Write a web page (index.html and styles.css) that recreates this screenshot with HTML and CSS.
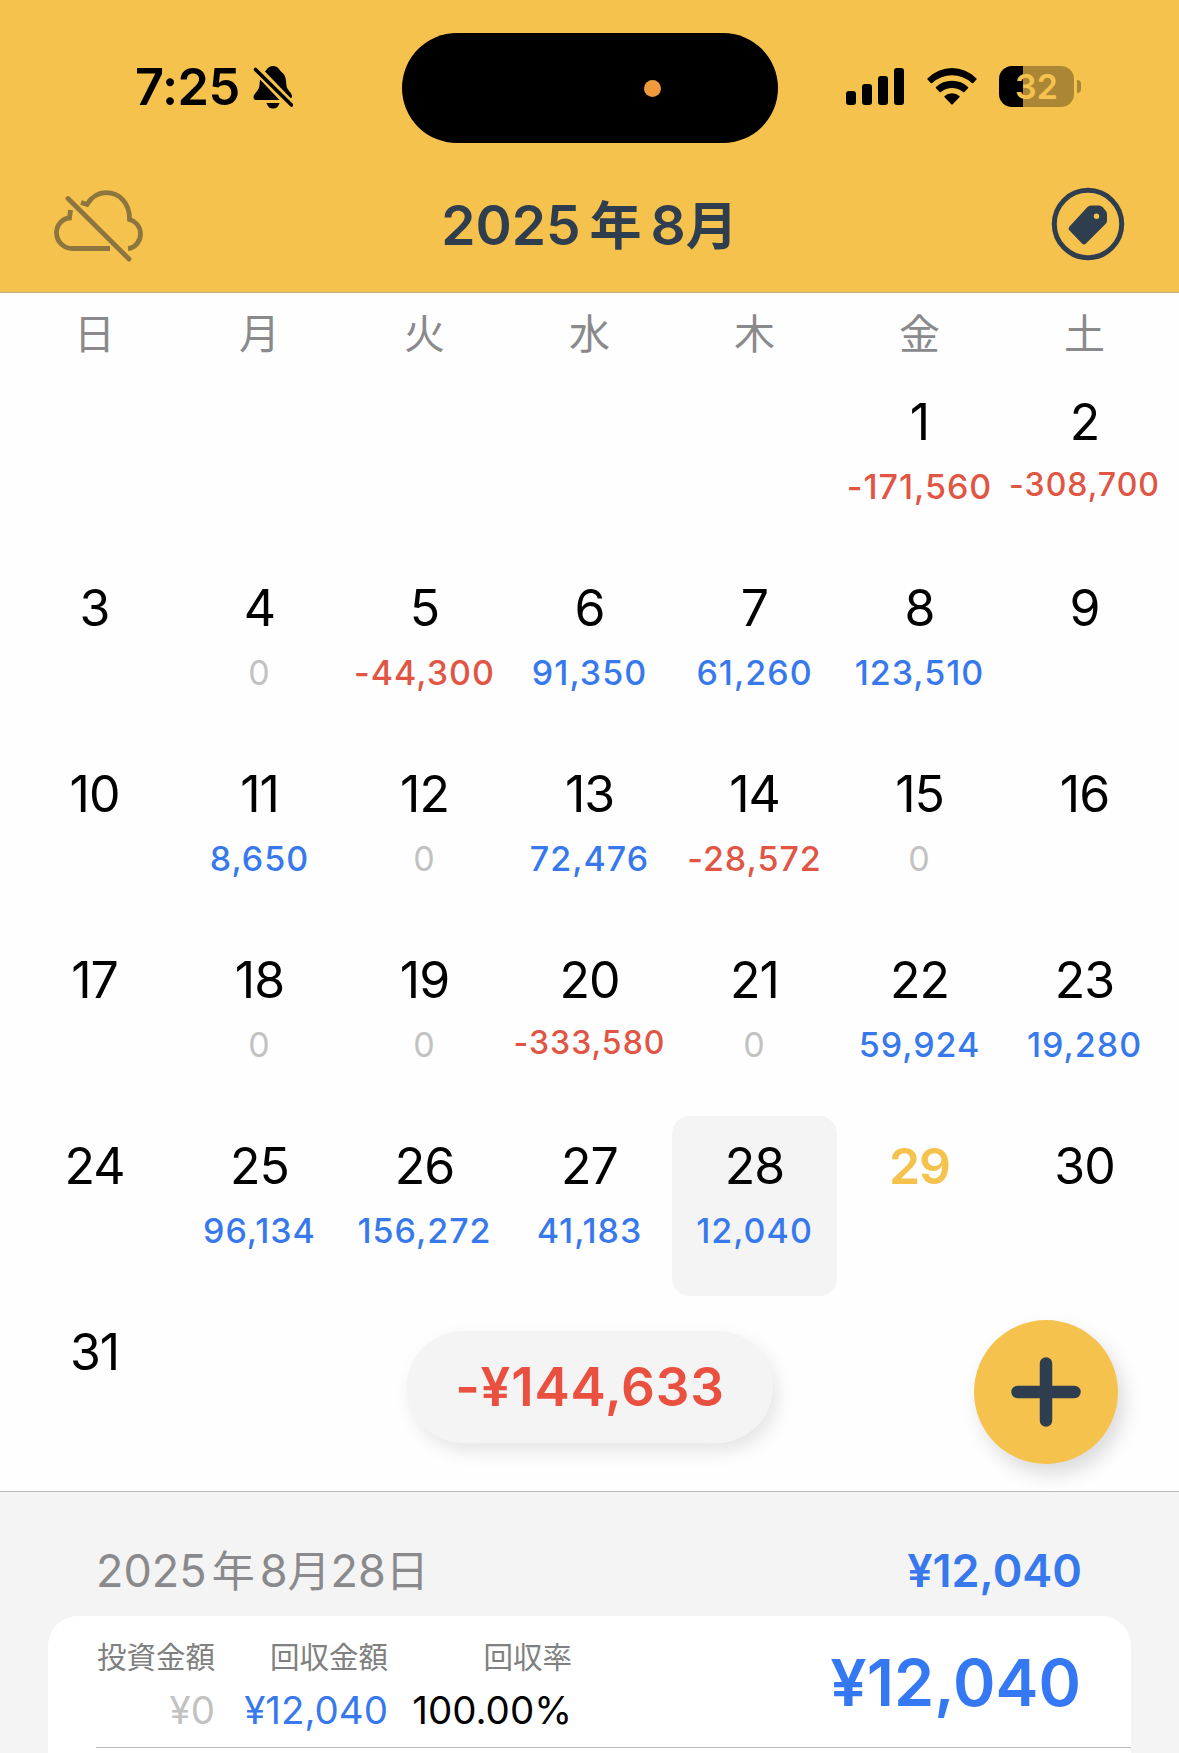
FILE: index.html
```html
<!DOCTYPE html>
<html lang="ja">
<head>
    <meta charset="UTF-8">
    <meta name="viewport" content="width=device-width, initial-scale=1.0">
    <title>2025年8月</title>
    <link rel="stylesheet" href="styles.css">
</head>
<body>

    <header class="header">
        <!-- ステータスバー -->
        <div class="status-bar">
            <div class="status-left">
                <span class="time">7:25</span>
                <svg class="bell" width="40" height="44" viewBox="0 0 40 44">
                    <path d="M12 6.500C14 5 14.500 1.200 20 1C25.500 1.200 26.500 5.500 28.500 7C33.500 10.500 33 17 33.500 21C34 25 39 27.500 39 31.500Q39 33 37.500 33Z"/>
                    <path d="M7 14.500L26.500 35H3Q.5 35 .5 32C.5 28.500 6 26.500 6.500 20Z"/>
                    <path d="M13.500 38H26.500Q25 43.500 20 43.500T13.500 38Z"/>
                    <path d="M2.500 4.500L38.500 40" fill="none" stroke="#f5c24d" stroke-width="7"/>
                    <path d="M2.500 4.500L38.500 40" fill="none" stroke="#000" stroke-width="3.600" stroke-linecap="round"/>
                </svg>
            </div>
            <div class="island"><span class="mic-dot"></span></div>
            <div class="status-right">
                <svg class="signal" width="58" height="37" viewBox="0 0 58 37">
                    <rect x="0" y="23" width="10" height="14" rx="3"/>
                    <rect x="16" y="16" width="10" height="21" rx="3"/>
                    <rect x="32" y="8" width="10" height="29" rx="3"/>
                    <rect x="48" y="0" width="10" height="37" rx="3"/>
                </svg>
                <svg class="wifi" width="50" height="37" viewBox="0 0 50 37">
                    <path d="M.5 10.500Q11 0 25 0T49.500 10.500Q50 11 49.500 11.600L46.200 15Q45.500 15.600 44.800 15Q36 7.300 25 7.300T5.200 15Q4.500 15.600 3.800 15L.5 11.600Q0 11 .5 10.500Z"/>
                    <path d="M9 19Q15.500 12.700 25 12.700T41 19Q41.600 19.600 41 20.200L37.400 24Q36.800 24.600 36.100 24Q31 20 25 20T13.900 24Q13.200 24.600 12.600 24L9 20.200Q8.400 19.600 9 19Z"/>
                    <path d="M17.600 28Q20.500 25.200 25 25.200T32.400 28Q33 28.600 32.400 29.200L25.700 36.300Q25 37 24.300 36.300L17.600 29.200Q17 28.600 17.600 28Z"/>
                </svg>
                <div class="battery">
                    <span class="battery-body">32</span>
                    <span class="battery-tip"></span>
                </div>
            </div>
        </div>

        <!-- ナビゲーション -->
        <div class="nav">
            <svg class="cloud-off" width="90" height="72" viewBox="0 0 90 72">
                <path d="M27 12.500L33 14.500C38 6.500 44 2.700 52 2.700C65.500 2.700 75.500 13 75.500 28.500V29.500C82 31.500 86.500 37 86.500 44C86.500 51.500 81 58 74 58.500" />
                <path d="M16.500 20L15.500 28C8.500 28.500 2.500 35 2.500 42.500C2.500 51.500 9.500 58.500 18.500 58.500H56"/>
                <path d="M14 8.500L75 69" stroke-linecap="round"/>
            </svg>
            <h1 class="title">2025<span class="year">年</span>8<span class="month">月</span></h1>
            <svg class="tag" width="74" height="74" viewBox="0 0 74 74">
                <circle cx="37" cy="37" r="33.700" fill="none" stroke="#2f3e4f" stroke-width="5"/>
                <path fill-rule="evenodd" fill="#2f3e4f" d="M40 18.500H48Q50 18.500 51.500 20L54.500 23.500Q56 25 56 27V33.500Q56 35.500 54.500 37L35 56.500Q33 58.300 31 56.500L18.500 43.500Q16.700 41.500 18.500 39.500L36.500 20Q38 18.500 40 18.500ZM45.500 26.500A2.700 2.700 0 1 0 45.500 31.900A2.700 2.700 0 1 0 45.500 26.500Z"/>
            </svg>
        </div>
    </header>

    <main class="calendar">
        <div class="weekdays">
            <span>日</span><span>月</span><span>火</span><span>水</span><span>木</span><span>金</span><span>土</span>
        </div>

        <div class="days">
            <div class="day first"><b>1</b><span class="minus">-171,560</span></div>
            <div class="day"><b>2</b><span class="minus small">-308,700</span></div>

            <div class="day"><b>3</b></div>
            <div class="day"><b>4</b><span class="zero">0</span></div>
            <div class="day"><b>5</b><span class="minus">-44,300</span></div>
            <div class="day"><b>6</b><span class="plus">91,350</span></div>
            <div class="day"><b>7</b><span class="plus">61,260</span></div>
            <div class="day"><b>8</b><span class="plus">123,510</span></div>
            <div class="day"><b>9</b></div>

            <div class="day"><b>10</b></div>
            <div class="day"><b>11</b><span class="plus">8,650</span></div>
            <div class="day"><b>12</b><span class="zero">0</span></div>
            <div class="day"><b>13</b><span class="plus">72,476</span></div>
            <div class="day"><b>14</b><span class="minus">-28,572</span></div>
            <div class="day"><b>15</b><span class="zero">0</span></div>
            <div class="day"><b>16</b></div>

            <div class="day"><b>17</b></div>
            <div class="day"><b>18</b><span class="zero">0</span></div>
            <div class="day"><b>19</b><span class="zero">0</span></div>
            <div class="day"><b>20</b><span class="minus small">-333,580</span></div>
            <div class="day"><b>21</b><span class="zero">0</span></div>
            <div class="day"><b>22</b><span class="plus">59,924</span></div>
            <div class="day"><b>23</b><span class="plus">19,280</span></div>

            <div class="day"><b>24</b></div>
            <div class="day"><b>25</b><span class="plus">96,134</span></div>
            <div class="day"><b>26</b><span class="plus">156,272</span></div>
            <div class="day"><b>27</b><span class="plus">41,183</span></div>
            <div class="day selected"><b>28</b><span class="plus">12,040</span></div>
            <div class="day today"><b>29</b></div>
            <div class="day"><b>30</b></div>

            <div class="day"><b>31</b></div>
        </div>

        <!-- 月の合計と追加ボタン -->
        <div class="total">-¥144,633</div>
        <button class="add" type="button" aria-label="追加">
            <svg width="70" height="70" viewBox="0 0 70 70">
                <path d="M35 6.500V63.500M6.500 35H63.500" stroke="#2f3e4f" stroke-width="12.500" stroke-linecap="round"/>
            </svg>
        </button>
    </main>

    <!-- 選択日の明細 -->
    <section class="detail">
        <div class="detail-head">
            <h2>2025<span class="cjk year">年</span>8<span class="cjk month">月</span>28<span class="cjk">日</span></h2>
            <span class="sum">¥12,040</span>
        </div>
        <div class="card">
            <div class="record">
                <dl class="c1"><dt>投資金額</dt><dd class="zero">¥0</dd></dl>
                <dl class="c2"><dt>回収金額</dt><dd class="plus">¥12,040</dd></dl>
                <dl class="c3"><dt>回収率</dt><dd>100.00%</dd></dl>
                <span class="profit">¥12,040</span>
            </div>
        </div>
    </section>

</body>
</html>
```
FILE: styles.css
```css
* {
    box-sizing: border-box;
    margin: 0;
    padding: 0;
}

body {
    width: 1179px;
    height: 1753px;
    overflow: hidden;
    background-color: #fefefe;
    color: #000;
    font-family: Inter, "Noto Sans CJK JP", sans-serif;
}

svg {
    display: block;
    flex: none;
}

/* ヘッダー */
.header {
    height: 293px;
    padding-top: 33px;
    background-color: #f5c24d;
    border-bottom: 1px solid #b9ac88;
}

.status-bar {
    display: grid;
    grid-template-columns: 402px 376px 1fr;
    height: 110px;
}

.status-left {
    display: flex;
    align-items: center;
    padding: 0 0 2px 135px;
}

.time {
    width: 118px;
    font-size: 50.5px;
    font-weight: 600;
    line-height: 50px;
    letter-spacing: -0.5px;
}

.island {
    display: flex;
    align-items: center;
    justify-content: flex-end;
    padding-right: 117px;
    border-radius: 55px;
    background-color: #000;
}

.mic-dot {
    width: 17px;
    height: 17px;
    border-radius: 50%;
    background-color: #f09a3e;
}

.status-right {
    display: flex;
    align-items: center;
    padding: 0 0 3px 68px;
}

.wifi {
    margin-left: 23px;
}

.battery {
    display: flex;
    align-items: center;
    margin-left: 22px;
}

.battery-body {
    width: 75px;
    height: 41px;
    border-radius: 13px;
    background: linear-gradient(to right, #000 24px, #ab8735 24px);
    color: #f5c24d;
    font-size: 34px;
    font-weight: 600;
    line-height: 41px;
    text-align: center;
}

.battery-tip {
    width: 4px;
    height: 13px;
    margin-left: 3px;
    border-radius: 0 4px 4px 0;
    background-color: #ab8735;
}

.nav {
    display: flex;
    align-items: center;
    justify-content: space-between;
    height: 149px;
    padding: 12px 54px 0;
}

.cloud-off {
    margin-top: 4px;
    fill: none;
    stroke: #8c753e;
    stroke-width: 4.8;
}

.title {
    padding-top: 4px;
    color: #2f3e4f;
    font-size: 55px;
    font-weight: 600;
    line-height: 60px;
}

.title .year {
    margin: 0 9px;
    font-size: 52px;
}

.title .month {
    font-size: 52px;
}

.tag {
    margin-left: 16px;
}

/* カレンダー */
.calendar {
    position: relative;
    height: 1198px;
    padding: 0 12px;
}

.weekdays {
    display: grid;
    grid-template-columns: repeat(7, 165px);
    height: 79px;
    padding-top: 2px;
    color: #8a8a8c;
    font-size: 41px;
    line-height: 79px;
    text-align: center;
}

.days {
    display: grid;
    grid-template-columns: repeat(7, 165px);
    grid-auto-rows: 180px;
    row-gap: 6px;
}

.day {
    display: flex;
    flex-direction: column;
    align-items: center;
    padding-top: 25px;
    border-radius: 18px;
}

.day.first {
    grid-column: 6;
}

.day b {
    font-size: 50px;
    font-weight: 400;
    line-height: 50px;
    letter-spacing: -1px;
}

.day span {
    margin-top: 23px;
    font-size: 34px;
    font-weight: 500;
    line-height: 34px;
    letter-spacing: 1px;
    white-space: nowrap;
}

.day .small {
    margin-top: 21px;
    font-size: 32px;
}

.day .zero {
    font-weight: 400;
}

.plus {
    color: #3779ed;
}

.minus {
    color: #e05543;
}

.zero {
    color: #c2c2c2;
}

.selected {
    background-color: #f4f4f4;
}

.today b {
    color: #f5c24d;
    font-weight: 600;
}

.total {
    position: absolute;
    left: 407px;
    top: 1038px;
    width: 366px;
    height: 112px;
    border-radius: 56px;
    background-color: #f4f4f4;
    box-shadow: 5px 8px 18px rgba(0, 0, 0, 0.1);
    color: #e9503f;
    font-size: 53px;
    font-weight: 600;
    line-height: 113px;
    letter-spacing: 0.8px;
    text-align: center;
}

.add {
    display: flex;
    align-items: center;
    justify-content: center;
    position: absolute;
    left: 974px;
    top: 1027px;
    width: 144px;
    height: 144px;
    border: none;
    border-radius: 50%;
    background-color: #f5c24d;
    box-shadow: 6px 10px 20px rgba(0, 0, 0, 0.14);
}

/* 明細 */
.detail {
    height: 262px;
    padding: 0 48px;
    border-top: 1px solid #b9b9b9;
    background-color: #f4f4f4;
}

.detail-head {
    display: flex;
    align-items: center;
    justify-content: space-between;
    height: 124px;
    padding: 34px 49px 0 48px;
}

.detail-head h2 {
    color: #8a8a8c;
    font-size: 45px;
    font-weight: 400;
    line-height: 50px;
}

.detail-head .cjk {
    font-size: 43px;
}

.detail-head .year {
    margin: 0 5px;
}

.sum {
    color: #3779ed;
    font-size: 45px;
    font-weight: 600;
    line-height: 50px;
}

.card {
    height: 150px;
    padding-left: 48px;
    border-radius: 30px 30px 0 0;
    background-color: #fff;
}

.record {
    display: flex;
    align-items: center;
    height: 132px;
    padding: 2px 50px 0 0;
    border-bottom: 1px solid #b9b9b9;
}

.record dl {
    padding-top: 5px;
    text-align: right;
}

.record .c1 {
    width: 119px;
}

.record .c2 {
    width: 173px;
}

.record .c3 {
    width: 184px;
}

.record dt {
    color: #808080;
    font-size: 29.5px;
    line-height: 50px;
}

.record dd {
    font-size: 38.5px;
    line-height: 57px;
}

.profit {
    margin-left: auto;
    color: #3578f3;
    font-size: 64.5px;
    font-weight: 600;
    line-height: 64px;
}
```
